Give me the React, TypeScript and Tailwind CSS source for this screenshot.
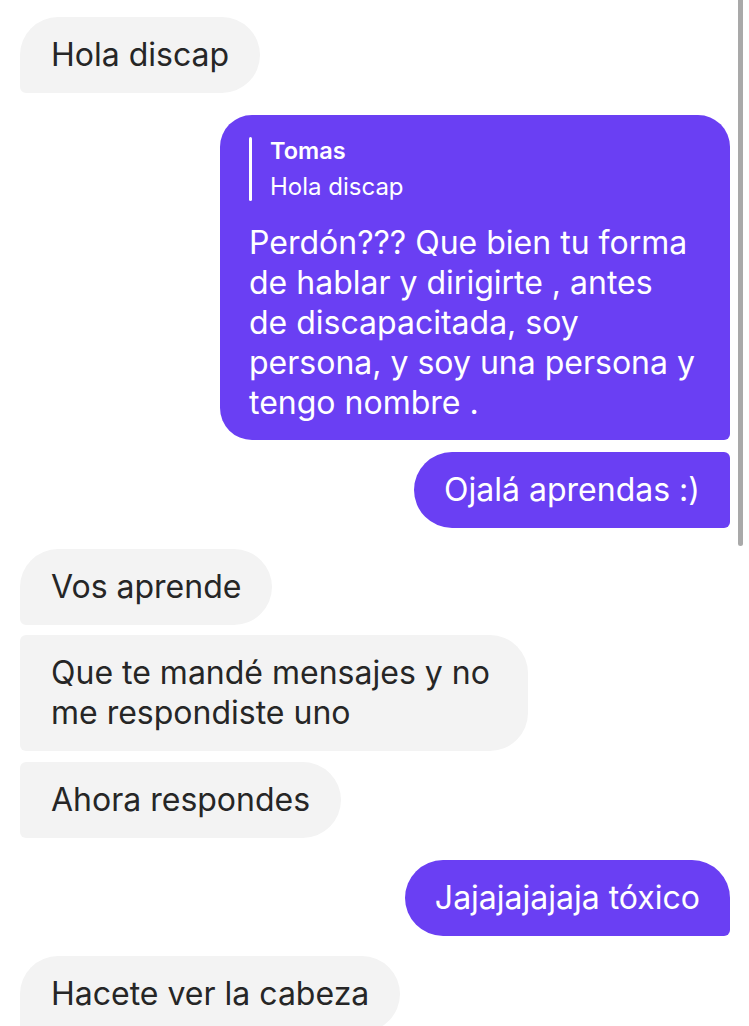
import React from "react";

const font = { fontFamily: "Inter, 'Noto Sans', 'Liberation Sans', sans-serif" };

function Received({ children, cls }: { children: React.ReactNode; cls: string }) {
  return (
    <div className="flex justify-start">
      <div className={`bg-[#f3f3f3] text-[#262626] text-[32px] leading-[40px] pl-[31px] py-[18px] ${cls}`}>{children}</div>
    </div>
  );
}

function Sent({ children, cls }: { children: React.ReactNode; cls: string }) {
  return (
    <div className="flex justify-end">
      <div className={`bg-[#6a3ff3] text-white text-[32px] leading-[40px] px-[30px] py-[18px] ${cls}`}>{children}</div>
    </div>
  );
}

export default function App() {
  return (
    <div className="relative w-[749px] h-[1026px] overflow-hidden bg-white" style={font}>
      <div className="flex flex-col pt-[17px] pl-[20px] pr-[19px]">
        <Received cls="pr-[31px] rounded-[38px] rounded-bl-[6px]">Hola discap</Received>

        <div className="mt-[22px] flex justify-end">
          <div className="w-[510px] bg-[#6a3ff3] text-white rounded-[32px] rounded-br-[6px] pl-[29px] pr-[10px] pt-[22px] pb-[17px]">
            <div className="flex">
              <div className="w-[3px] bg-white rounded-full mr-[18px]" />
              <div className="flex flex-col">
                <div className="text-[23.5px] leading-[28px] font-semibold">Tomas</div>
                <div className="text-[24px] leading-[28px] mt-[8px]">Hola discap</div>
              </div>
            </div>
            <div className="mt-[22px] text-[32px] leading-[40px] whitespace-nowrap">
              Perdón??? Que bien tu forma<br />
              de hablar y dirigirte , antes<br />
              de discapacitada, soy<br />
              persona, y soy una persona y<br />
              tengo nombre .
            </div>
          </div>
        </div>

        <div className="mt-[12px]">
          <Sent cls="rounded-l-[38px] rounded-r-[6px]">Ojalá aprendas :)</Sent>
        </div>

        <div className="mt-[21px]">
          <Received cls="pr-[31px] rounded-[38px] rounded-bl-[6px]">Vos aprende</Received>
        </div>
        <div className="mt-[10px]">
          <Received cls="pr-[38px] rounded-r-[38px] rounded-l-[6px] whitespace-nowrap">
            Que te mandé mensajes y no<br />me respondiste uno
          </Received>
        </div>
        <div className="mt-[11px]">
          <Received cls="pr-[31px] rounded-r-[38px] rounded-l-[6px]">Ahora respondes</Received>
        </div>

        <div className="mt-[22px]">
          <Sent cls="rounded-[38px] rounded-br-[6px]">Jajajajajaja tóxico</Sent>
        </div>

        <div className="mt-[20px]">
          <Received cls="pr-[31px] rounded-[38px] rounded-bl-[6px]">Hacete ver la cabeza</Received>
        </div>
      </div>

      <div className="absolute left-[738px] top-0 w-[5px] h-[546px] rounded-b-full bg-[#a9a9a9]" />
    </div>
  );
}
